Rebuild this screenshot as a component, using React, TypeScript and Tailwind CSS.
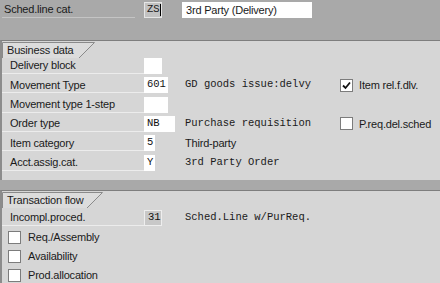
import React from "react";

const Tab = ({ text, w }: { text: string; w: number }) => (
  <div className="relative h-[16px] flex items-center" style={{ width: w }}>
    <div className="absolute inset-0">
      <svg width={w} height={16} className="block">
        <polyline points={`0.5,16 0.5,0.5 ${w - 0.5},0.5 ${w - 16},16`} fill="#dcdcdc" stroke="#8a8a8a" strokeWidth="1" />
      </svg>
    </div>
    <span className="relative pl-[5px] text-[#1a1a1a]">{text}</span>
  </div>
);

const Label = ({ text, w = 142 }: { text: string; w?: number }) => (
  <div
    className="h-[16px] flex items-center pl-[8px] border-b border-[#ececec] shrink-0 text-[#1a1a1a]"
    style={{ width: w }}
  >
    {text}
  </div>
);

const Field = ({ v, w, gray }: { v: string; w: number; gray?: boolean }) => (
  <div
    className={`h-[16px] flex items-center pl-[3px] shrink-0 font-['Liberation_Mono',monospace] text-[10.5px] tracking-normal text-[#111] ${
      gray ? "bg-[#c8c8c8] border border-[#eeeeee]" : "bg-white"
    }`}
    style={{ width: w }}
  >
    {v}
  </div>
);

const Check = ({ on }: { on?: boolean }) => (
  <div className="w-[13px] h-[13px] bg-white border border-[#7c7c7c] flex items-center justify-center shrink-0">
    {on && (
      <svg width="9" height="9" viewBox="0 0 9 9">
        <path d="M1 4.5 L3.5 7 L8 1.5" fill="none" stroke="#111" strokeWidth="1.8" />
      </svg>
    )}
  </div>
);

const Mono = ({ t }: { t: string }) => (
  <span className="font-['Liberation_Mono',monospace] text-[10.5px] tracking-normal text-[#1a1a1a] whitespace-pre">{t}</span>
);

export default function App() {
  return (
    <div className="w-[440px] h-[283px] overflow-hidden bg-[#a9a9a9] font-['Liberation_Sans',Arial,sans-serif] text-[11px] tracking-[-0.2px] text-[#1a1a1a]">
      {/* top bar */}
      <div className="h-[40px] pt-[2px] pl-[2px] flex items-start">
        <div className="w-[133px] h-[16px] flex items-center pl-[2px] border-b border-[#c4c4c4]">Sched.line cat.</div>
        <div className="ml-[9px] w-[18px] h-[16px] bg-[#c2c2c2] border border-[#e6e6e6] flex items-center pl-[2px] font-['Liberation_Mono',monospace] text-[10.5px] tracking-normal">
          ZS<span className="inline-block w-[1px] h-[12px] bg-black" />
        </div>
        <div className="ml-[20px] w-[130px] h-[16px] bg-white flex items-center pl-[4px]">3rd Party (Delivery)</div>
      </div>

      {/* Business data */}
      <div className="h-[140px] bg-[#d6d6d6] border-t border-[#7e7e7e] border-l-2 border-l-[#8c8c8c] pt-[1px] flex flex-col">
        <Tab text="Business data" w={93} />
        <div className="flex flex-col gap-[3px]">
          <div className="flex items-center">
            <Label text="Delivery block" />
            <Field v="" w={18} />
          </div>
          <div className="flex items-center">
            <Label text="Movement Type" />
            <Field v="601" w={24} />
            <div className="w-[17px]" />
            <Mono t="GD goods issue:delvy" />
            <div className="ml-[29px] flex items-center gap-[6px]">
              <Check on />
              <span>Item rel.f.dlv.</span>
            </div>
          </div>
          <div className="flex items-center">
            <Label text="Movement type 1-step" />
            <Field v="" w={24} />
          </div>
          <div className="flex items-center">
            <Label text="Order type" />
            <Field v="NB" w={31} />
            <div className="w-[10px]" />
            <Mono t="Purchase requisition" />
            <div className="ml-[29px] flex items-center gap-[6px]">
              <Check />
              <span>P.req.del.sched</span>
            </div>
          </div>
          <div className="flex items-center">
            <Label text="Item category" />
            <Field v="5" w={11} />
            <div className="w-[30px]" />
            <span>Third-party</span>
          </div>
          <div className="flex items-center">
            <Label text="Acct.assig.cat." />
            <Field v="Y" w={11} />
            <div className="w-[30px]" />
            <Mono t="3rd Party Order" />
          </div>
        </div>
      </div>

      <div className="h-[10px]" />

      {/* Transaction flow */}
      <div className="h-[93px] bg-[#d6d6d6] border-t border-[#7e7e7e] border-l-2 border-l-[#8c8c8c] pt-[1px] flex flex-col">
        <Tab text="Transaction flow" w={101} />
        <div className="flex flex-col gap-[3px] mt-[2px]">
          <div className="flex items-center">
            <Label text="Incompl.proced." />
            <Field v="31" w={18} gray />
            <div className="w-[23px]" />
            <Mono t="Sched.Line w/PurReq." />
          </div>
          {["Req./Assembly", "Availability", "Prod.allocation"].map((t) => (
            <div key={t} className="h-[16px] flex items-center pl-[6px] gap-[7px]">
              <Check />
              <span>{t}</span>
            </div>
          ))}
        </div>
      </div>
    </div>
  );
}
